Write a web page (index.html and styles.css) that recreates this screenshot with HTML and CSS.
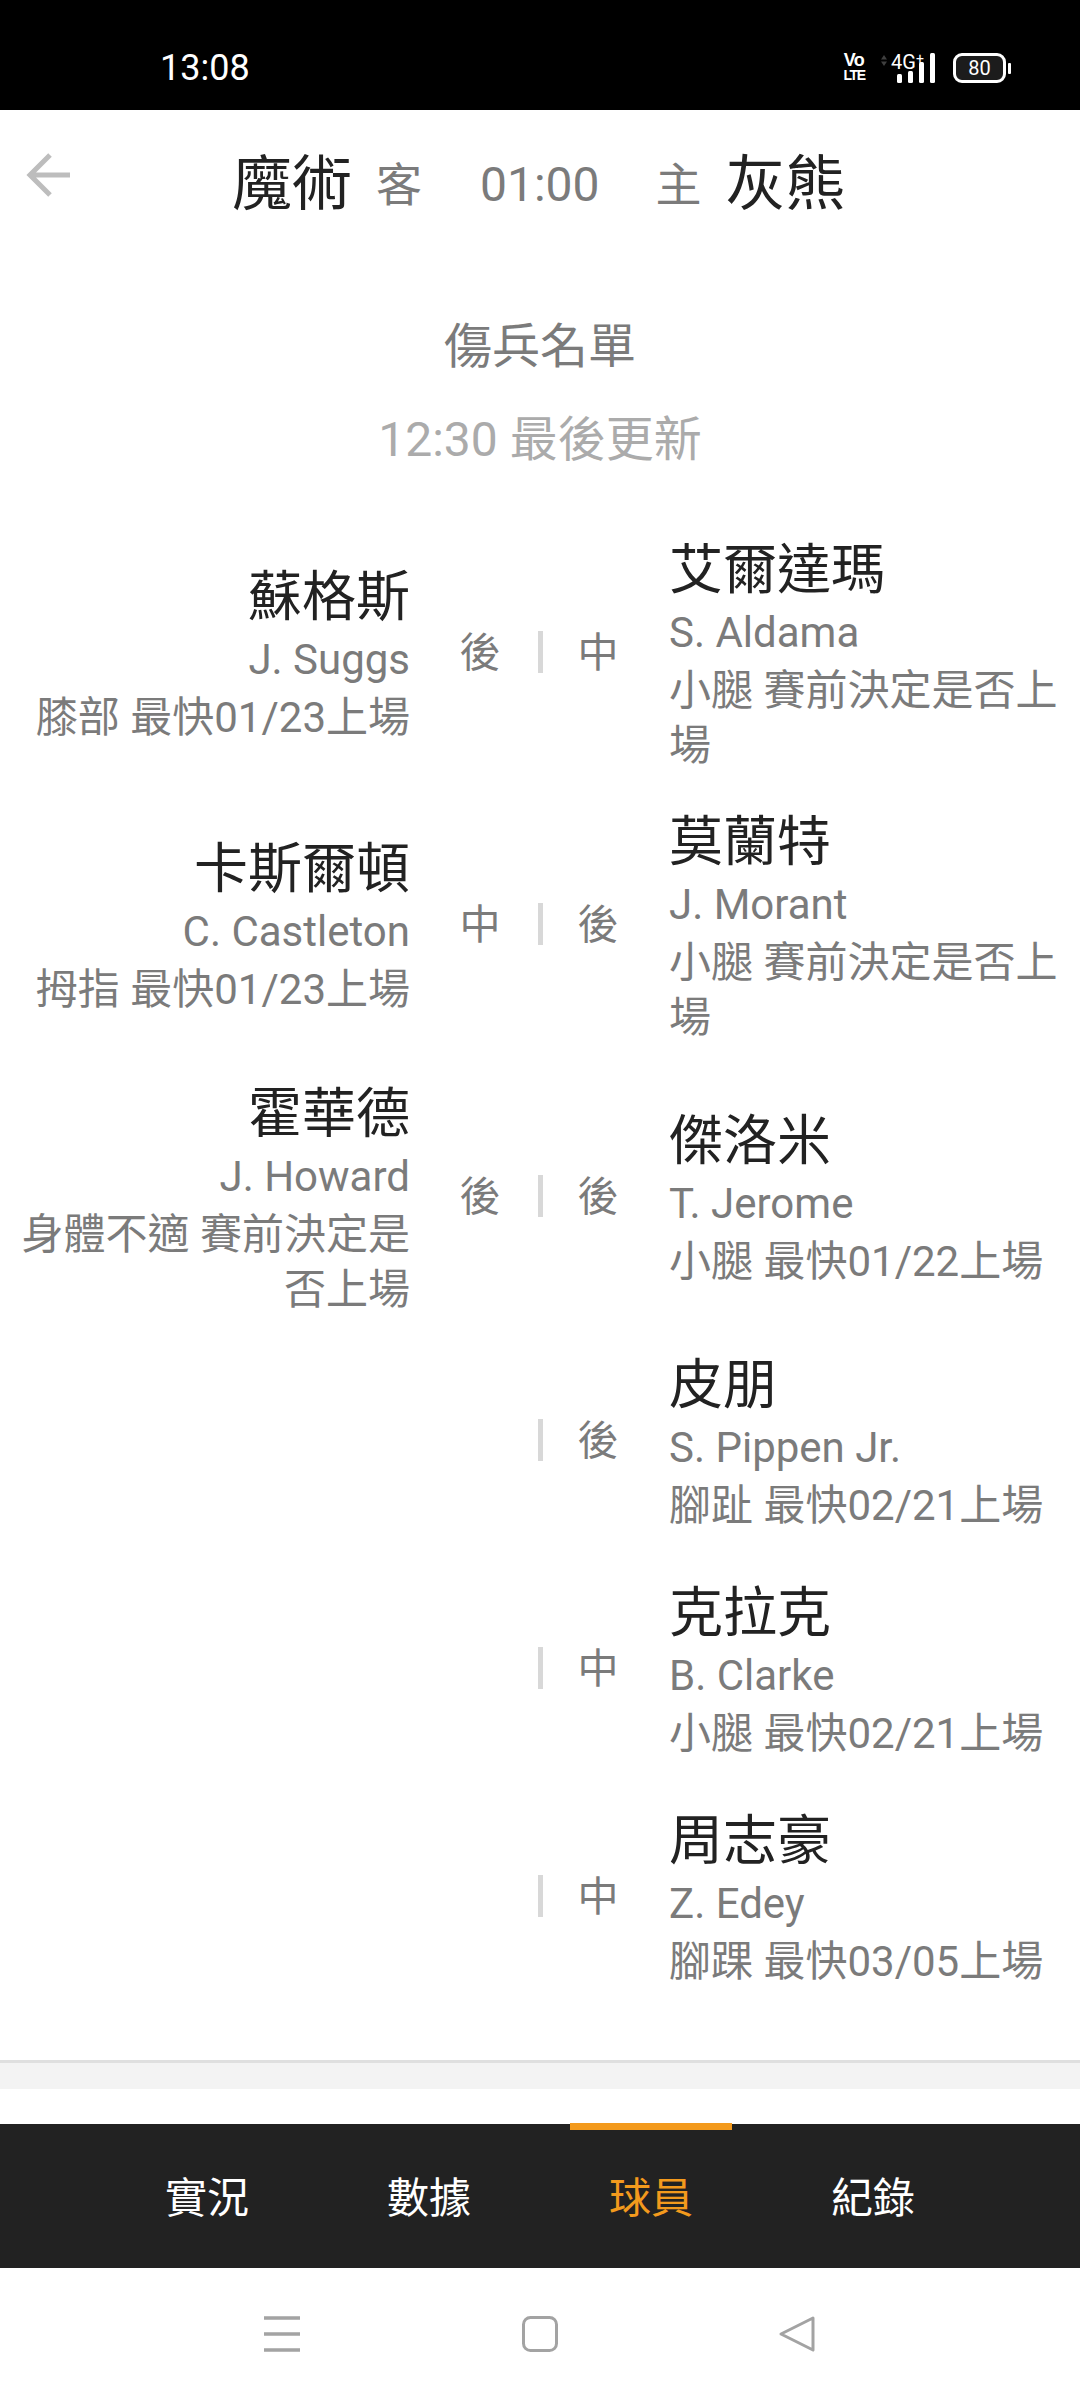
FILE: index.html
```html
<!DOCTYPE html>
<html lang="zh-Hant">
<head>
<meta charset="utf-8">
<title>傷兵名單</title>
<link rel="stylesheet" href="styles.css">
</head>
<body>
<div class="status">
  <span class="time">13:08</span>
  <div class="status-icons">
    <div class="volte"><span class="volte-top">Vo</span><span class="volte-bottom">LTE</span></div>
    <svg class="signal" width="56" height="30" viewBox="0 0 56 30">
      <path d="M4 2 1 6.500h6zM4 13 1 8.500h6z" fill="#3f3f3f"/>
      <rect x="17" y="21" width="5" height="9" rx="1.500" fill="#fff"/>
      <rect x="28" y="18" width="5" height="12" rx="1.500" fill="#fff"/>
      <rect x="39" y="9" width="5" height="21" rx="1.500" fill="#fff"/>
      <rect x="50" y="0" width="5" height="30" rx="1.500" fill="#fff"/>
    </svg>
    <span class="net">4G<sup>+</sup></span>
    <div class="battery"><span class="battery-level">80</span></div>
    <span class="battery-cap"></span>
  </div>
</div>

<header class="score">
  <svg class="back" width="46" height="46" viewBox="0 0 46 46"><path d="M24 3 4 23l20 20M4 23h40" fill="none" stroke="#bdbdbd" stroke-width="5"/></svg>
  <span class="team">魔術</span>
  <span class="side side-away">客</span>
  <span class="clock">01:00</span>
  <span class="side side-home">主</span>
  <span class="team">灰熊</span>
</header>

<section class="heading">
  <h1 class="title">傷兵名單</h1>
  <p class="updated">12:30 最後更新</p>
</section>

<main class="list">
  <div class="row row-tall">
    <div class="player player-left"><div class="name">蘇格斯</div><div class="latin">J. Suggs</div><div class="note">膝部 最快01/23上場</div></div>
    <div class="pos">後</div><div class="rule"></div><div class="pos">中</div>
    <div class="player player-right"><div class="name">艾爾達瑪</div><div class="latin">S. Aldama</div><div class="note">小腿 賽前決定是否上場</div></div>
  </div>
  <div class="row row-tall">
    <div class="player player-left"><div class="name">卡斯爾頓</div><div class="latin">C. Castleton</div><div class="note">拇指 最快01/23上場</div></div>
    <div class="pos">中</div><div class="rule"></div><div class="pos">後</div>
    <div class="player player-right"><div class="name">莫蘭特</div><div class="latin">J. Morant</div><div class="note">小腿 賽前決定是否上場</div></div>
  </div>
  <div class="row row-tall">
    <div class="player player-left"><div class="name">霍華德</div><div class="latin">J. Howard</div><div class="note">身體不適 賽前決定是否上場</div></div>
    <div class="pos">後</div><div class="rule"></div><div class="pos">後</div>
    <div class="player player-right"><div class="name">傑洛米</div><div class="latin">T. Jerome</div><div class="note">小腿 最快01/22上場</div></div>
  </div>
  <div class="row row-short row-first-short">
    <div class="player player-left"></div>
    <div class="pos"></div><div class="rule"></div><div class="pos">後</div>
    <div class="player player-right"><div class="name">皮朋</div><div class="latin">S. Pippen Jr.</div><div class="note">腳趾 最快02/21上場</div></div>
  </div>
  <div class="row row-short">
    <div class="player player-left"></div>
    <div class="pos"></div><div class="rule"></div><div class="pos">中</div>
    <div class="player player-right"><div class="name">克拉克</div><div class="latin">B. Clarke</div><div class="note">小腿 最快02/21上場</div></div>
  </div>
  <div class="row row-short">
    <div class="player player-left"></div>
    <div class="pos"></div><div class="rule"></div><div class="pos">中</div>
    <div class="player player-right"><div class="name">周志豪</div><div class="latin">Z. Edey</div><div class="note">腳踝 最快03/05上場</div></div>
  </div>
</main>

<div class="band"></div>

<nav class="tabs">
  <div class="tab">實況</div>
  <div class="tab">數據</div>
  <div class="tab tab-active">球員</div>
  <div class="tab">紀錄</div>
</nav>

<div class="sysnav">
  <svg width="38" height="36" viewBox="0 0 38 36"><path d="M1 2h36M1 18h36M1 34h36" stroke="#a3a3a3" stroke-width="3.500"/></svg>
  <svg width="38" height="38" viewBox="0 0 38 38"><rect x="2.500" y="2.500" width="33" height="33" rx="7" fill="none" stroke="#a3a3a3" stroke-width="3"/></svg>
  <svg width="38" height="38" viewBox="0 0 38 38"><path d="M35 3 3 19l32 16z" fill="none" stroke="#a3a3a3" stroke-width="3" stroke-linejoin="round"/></svg>
</div>
</body>
</html>
```

FILE: styles.css
```css
* { box-sizing: border-box; }
html, body { margin: 0; padding: 0; }
body {
  width: 1080px;
  height: 2400px;
  background: #fff;
  overflow: hidden;
  font-family: Roboto, "Noto Sans CJK TC", sans-serif;
  color: #7b7b7b;
}

.status {
  height: 110px;
  background: #000;
  color: #fff;
  display: flex;
  align-items: center;
  justify-content: space-between;
  padding: 26px 69px 0 160px;
}
.time { font-size: 36px; line-height: 44px; }
.status-icons { display: flex; align-items: center; position: relative; }
.volte {
  display: flex;
  flex-direction: column;
  font-family: "Liberation Sans", sans-serif;
  font-weight: 700;
  align-items: center;
  margin-right: 15px;
  width: 22px;
}
.volte-top { font-size: 18px; line-height: 15px; letter-spacing: -0.5px; }
.volte-bottom { font-size: 14px; line-height: 15px; letter-spacing: -1.4px; }
.net {
  position: absolute;
  left: 48px;
  top: -3px;
  font-size: 20px;
  line-height: 24px;
  color: #fff;
}
.net sup { font-size: 14px; line-height: 0; vertical-align: 5px; }
.battery {
  margin-left: 17px;
  width: 53px;
  height: 30px;
  border: 3px solid #fff;
  border-radius: 9px;
  display: flex;
  align-items: center;
  justify-content: center;
  background: #1c1c1c;
}
.battery-level { font-size: 20px; line-height: 24px; color: #fff; }
.battery-cap { width: 3px; height: 11px; margin-left: 2px; background: #fff; border-radius: 1px; }

.score {
  height: 146px;
  position: relative;
  display: flex;
  align-items: center;
  padding: 4px 0 0 232px;
}
.back { position: absolute; left: 26px; top: 42px; }
.team { font-size: 60px; line-height: 76px; color: #222; width: 120px; }
.side { font-size: 46px; line-height: 60px; color: #7b7b7b; }
.side-away { margin-left: 24px; }
.side-home { margin-left: 56px; }
.side-home + .team { margin-left: 24px; }
.clock { font-size: 48px; line-height: 60px; margin-left: 58px; color: #7b7b7b; }

.heading { height: 260px; text-align: center; padding-top: 56px; }
.title { margin: 0; font-size: 48px; line-height: 70px; font-weight: 400; color: #7b7b7b; }
.updated { margin: 23px 0 0; font-size: 48px; line-height: 70px; color: #ababab; }

.list { height: 1544px; padding-top: 6px; }
.row {
  display: grid;
  grid-template-columns: 406px 116px 5px 110px 1fr;
  padding-left: 16px;
  align-items: center;
}
.row-tall { height: 260px; margin-bottom: 12px; }
.row-short { height: 216px; margin-bottom: 12px; }
.row-first-short { margin-top: -6px; }
.player { padding-top: 6px; }
.player-left { text-align: right; padding-right: 12px; }
.player-right { padding-left: 16px; }
.name { font-size: 54px; line-height: 66px; color: #222; }
.latin { font-size: 42px; line-height: 58px; color: #7b7b7b; }
.note { font-size: 42px; line-height: 55px; color: #7b7b7b; margin-top: 1px; }
.pos { font-size: 41px; line-height: 50px; padding-top: 2px; text-align: center; color: #7b7b7b; }
.rule { height: 42px; background: #d8d8d8; }

.band {
  height: 29px;
  background: #f3f3f3;
  border-top: 3px solid #dfdfdf;
}

.tabs {
  margin-top: 35px;
  height: 144px;
  background: #222;
  display: flex;
  padding: 0 96px;
  align-items: center;
}
.tab { width: 222px; font-size: 42px; line-height: 60px; color: #fff; position: relative; height: 144px; display: flex; align-items: center; justify-content: center; padding-top: 6px; }
.tab-active { color: #f39a1d; }
.tab-active::before {
  content: "";
  position: absolute;
  left: 30px;
  top: -1px;
  width: 162px;
  height: 7px;
  background: #f39a1d;
}

.sysnav {
  height: 132px;
  display: flex;
  align-items: center;
  padding: 0 264px 0 263px;
  justify-content: space-between;
}
```
